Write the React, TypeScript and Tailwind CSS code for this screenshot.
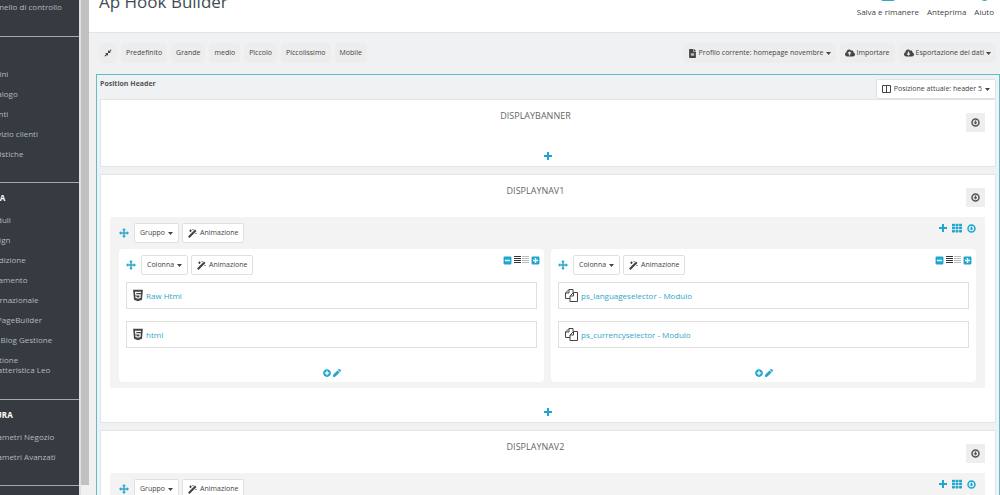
import type { ReactNode } from "react";
import {
  FaCloudDownloadAlt,
  FaCloudUploadAlt,
  FaCompressAlt,
  FaFileAlt,
  FaHtml5,
  FaMinusSquare,
  FaPen,
  FaPlusCircle,
  FaPlusSquare,
  FaTh,
} from "react-icons/fa";

type Widget = { name: string; icon: "html" | "module" };

const shopLinks = ["Ordini", "Catalogo", "Clienti", "Servizio clienti", "Statistiche"];
const improveLinks = [
  "Moduli",
  "Design",
  "Spedizione",
  "Pagamento",
  "Internazionale",
  "Ap PageBuilder",
  "Leo Blog Gestione",
];
const configLinks = ["Parametri Negozio", "Parametri Avanzati"];
const sizes = ["Predefinito", "Grande", "medio", "Piccolo", "Piccolissimo", "Mobile"];

const nav1Columns: Widget[][] = [
  [
    { name: "Raw Html", icon: "html" },
    { name: "html", icon: "html" },
  ],
  [
    { name: "ps_languageselector - Modulo", icon: "module" },
    { name: "ps_currencyselector - Modulo", icon: "module" },
  ],
];

function CircleDown() {
  return (
    <svg width="9" height="9" viewBox="0 0 18 18" fill="none" aria-hidden="true">
      <circle cx="9" cy="9" r="7" stroke="currentColor" strokeWidth="3" />
      <path d="M7.500 5h3v4h2.500L9 13 5 9h2.500z" fill="currentColor" />
    </svg>
  );
}

function PlusIcon() {
  return (
    <svg width="8" height="8" viewBox="0 0 8 8" fill="currentColor" aria-hidden="true">
      <path d="M3 0h2v3h3v2H5v3H3V5H0V3h3z" />
    </svg>
  );
}

function MoveIcon() {
  return (
    <svg width="10" height="10" viewBox="0 0 20 20" fill="currentColor" aria-hidden="true">
      <path d="M10 0l4 4.500h-2.500v4h4V6L20 10l-4.500 4v-2.500h-4v4H14L10 20l-4-4.500h2.500v-4h-4V14L0 10l4.500-4v2.500h4v-4H6z" />
    </svg>
  );
}

function WandIcon() {
  return (
    <svg width="9" height="9" viewBox="0 0 18 18" fill="currentColor" aria-hidden="true">
      <path d="M0 15L14 1l3 3L3 18z" />
      <path d="M4 1h2v5H4zM2.500 2.500h5v2h-5zM9 0h2v2H9zM15 8h2v2h-2z" />
    </svg>
  );
}

function Caret() {
  return (
    <svg width="5" height="3" viewBox="0 0 5 3" fill="currentColor" aria-hidden="true">
      <path d="M0 0h5L2.500 3z" />
    </svg>
  );
}

function CopyIcon() {
  return (
    <svg
      width="13"
      height="13"
      viewBox="0 0 26 26"
      fill="none"
      stroke="currentColor"
      strokeWidth="2"
      strokeLinejoin="round"
      aria-hidden="true"
      className="shrink-0"
    >
      <path d="M10 19H1V8l7-7h8v6" />
      <path d="M8 1v7H1" />
      <path d="M10 14l7-7h8v18H10z" />
      <path d="M17 7v7h-7" />
    </svg>
  );
}

function ColumnsIcon() {
  return (
    <svg width="9" height="8" viewBox="0 0 9 8" fill="none" stroke="currentColor" aria-hidden="true">
      <path d="M.5.5h8v7h-8zM4.500.5v7" />
    </svg>
  );
}

// four dark bars next to four light ones
function WidthBars() {
  return (
    <svg width="15" height="8" viewBox="0 0 15 8" aria-hidden="true">
      {[0, 2, 4, 6].map((y) => (
        <g key={y}>
          <rect x="0" y={y} width="7" height="1" fill="#333" />
          <rect x="8" y={y} width="7" height="1" fill="#bbb" />
        </g>
      ))}
    </svg>
  );
}

function NavLinks({ links }: { links: string[] }) {
  return (
    <ul className="pl-5">
      {links.map((link) => (
        <li key={link} className="h-5">
          <a href="#" className="whitespace-nowrap">
            {link}
          </a>
        </li>
      ))}
    </ul>
  );
}

function Sidebar() {
  return (
    <aside className="w-[79px] shrink-0 overflow-hidden bg-[#363a41] text-[8px] text-[#b4b9be]">
      <nav className="-ml-[35px] leading-[10px]">
        <div className="h-[37px] border-b border-[#a5a9ad] pt-0.5 pl-5">
          <a href="#" className="whitespace-nowrap">
            Pannello di controllo
          </a>
        </div>
        <div className="h-[146px] border-b border-[#a5a9ad] pt-8">
          <NavLinks links={shopLinks} />
        </div>
        <div className="h-[217px] border-b border-[#a5a9ad] pt-2.5">
          <h2 className="mb-3 font-bold text-white">MIGLIORA</h2>
          <NavLinks links={improveLinks} />
          <a href="#" className="block pl-5">
            Gestione
            <br />
            Caratteristica Leo
          </a>
        </div>
        <div className="h-[86px] border-b border-[#a5a9ad] pt-2.5">
          <h2 className="mb-3 font-bold text-white">CONFIGURA</h2>
          <NavLinks links={configLinks} />
        </div>
      </nav>
    </aside>
  );
}

function ToolButton({ children, label }: { children: ReactNode; label?: string }) {
  return (
    <button
      type="button"
      aria-label={label}
      className="flex h-5 items-center gap-0.5 rounded-sm bg-[#ededee] px-[5px] whitespace-nowrap text-[#444]"
    >
      {children}
    </button>
  );
}

function OutlineButton({ children }: { children: ReactNode }) {
  return (
    <button
      type="button"
      className="flex h-5 items-center gap-[3px] rounded-xs border border-[#e0e0e0] bg-white px-[5px] whitespace-nowrap text-[#444]"
    >
      {children}
    </button>
  );
}

function IconButton({ label, children }: { label: string; children: ReactNode }) {
  return (
    <button type="button" aria-label={label} className="text-[#1fa6cf]">
      {children}
    </button>
  );
}

function BlockControls({ label }: { label: string }) {
  return (
    <div className="flex items-center gap-[5px] text-[#2da9cc]">
      <MoveIcon />
      <div className="flex gap-[3px]">
        <OutlineButton>
          {label}
          <Caret />
        </OutlineButton>
        <OutlineButton>
          <WandIcon />
          Animazione
        </OutlineButton>
      </div>
    </div>
  );
}

function Column({ widgets }: { widgets: Widget[] }) {
  return (
    <div className="h-[133px] flex-1 rounded-sm bg-white pt-1.5">
      <div className="mb-[7px] flex justify-between pr-1 pl-[7px]">
        <BlockControls label="Colonna" />
        <div className="flex h-2.5 items-center gap-0.5">
          <IconButton label="Riduci">
            <FaMinusSquare size={9} />
          </IconButton>
          <WidthBars />
          <IconButton label="Allarga">
            <FaPlusSquare size={9} />
          </IconButton>
        </div>
      </div>
      <div className="flex flex-col gap-3 px-[7px]">
        {widgets.map((widget) => (
          <div
            key={widget.name}
            className="flex h-[27px] items-center gap-[3px] border border-[#dfdfdf] px-1.5 text-[#444]"
          >
            {widget.icon === "html" ? <FaHtml5 className="h-[13px] w-2.5" /> : <CopyIcon />}
            <a href="#" className="text-[8px] leading-3 text-[#2fa6cb]">
              {widget.name}
            </a>
          </div>
        ))}
      </div>
      <div className="mt-[21px] flex justify-center gap-0.5">
        <IconButton label="Aggiungi">
          <FaPlusCircle size={8} />
        </IconButton>
        <IconButton label="Modifica">
          <FaPen size={8} />
        </IconButton>
      </div>
    </div>
  );
}

function Group({ columns }: { columns: Widget[][] }) {
  return (
    <div className="mt-2.5 mr-2.5 ml-[9px] h-[171px] bg-[#f3f3f3] px-[9px] pt-1.5">
      <div className="mb-1.5 flex justify-between">
        <BlockControls label="Gruppo" />
        <div className="flex h-2.5 items-center gap-[5px]">
          <IconButton label="Aggiungi colonna">
            <PlusIcon />
          </IconButton>
          <IconButton label="Griglia">
            <FaTh size={10} />
          </IconButton>
          <IconButton label="Espandi">
            <CircleDown />
          </IconButton>
        </div>
      </div>
      <div className="flex gap-[7px]">
        {columns.map((widgets, i) => (
          <Column key={i} widgets={widgets} />
        ))}
      </div>
    </div>
  );
}

function Hook({ name, columns }: { name: string; columns?: Widget[][] }) {
  return (
    <section className="mb-[7px] border border-[#e2e4e6] bg-white">
      <div className="flex gap-1.5 px-2.5">
        <h3 className="flex-1 pt-2.5 text-center text-[9px] leading-3 text-[#666]">{name}</h3>
        <button
          type="button"
          aria-label={"Comprimi " + name}
          className="mt-[13px] flex h-[19px] w-[19px] items-center justify-center bg-[#eee] text-[#555]"
        >
          <CircleDown />
        </button>
      </div>
      {columns && <Group columns={columns} />}
      <div className="flex h-[34px] items-center justify-center pt-3.5">
        <IconButton label={"Aggiungi a " + name}>
          <PlusIcon />
        </IconButton>
      </div>
    </section>
  );
}

export default function App() {
  return (
    <div className="flex h-screen overflow-hidden bg-[#eff1f2] font-['Open_Sans','Noto_Sans',sans-serif] text-[7px] text-[#555]">
      <Sidebar />
      <div className="w-2.5 shrink-0 border-l-2 border-[#dfdfdf] bg-[#f1f1f1]">
        <div className="h-[485px] bg-[#c1c1c1]" />
      </div>

      <div className="min-w-0 flex-1">
        <header className="flex h-[33px] justify-between overflow-hidden border-b border-[#e1e4e6] bg-white pr-1.5 pl-2.5">
          <h1 className="-mt-2 text-[17px] leading-5 text-[#414c52]">Ap Hook Builder</h1>
          <div className="-mt-2 flex gap-2 text-[8px] text-[#444]">
            <a href="#" className="flex flex-col items-center">
              <span className="mb-[5px] h-[9px] w-3.5 rounded-xs bg-[#2fabbd]" />
              Salva e rimanere
            </a>
            <a href="#" className="flex flex-col items-center pt-3.5">
              Anteprima
            </a>
            <a href="#" className="flex flex-col items-center">
              <span className="mb-[5px] h-[9px] w-[9px] rounded-full bg-[#2fabbd]" />
              Aiuto
            </a>
          </div>
        </header>

        <div className="flex justify-between pt-2.5 pr-1 pb-[11px] pl-2.5">
          <div className="flex gap-1">
            <ToolButton label="Comprimi">
              <FaCompressAlt size={8} />
            </ToolButton>
            {sizes.map((size) => (
              <ToolButton key={size}>{size}</ToolButton>
            ))}
          </div>
          <div className="flex gap-1">
            <ToolButton>
              <FaFileAlt size={9} />
              Profilo corrente: homepage novembre
              <Caret />
            </ToolButton>
            <ToolButton>
              <FaCloudUploadAlt size={10} />
              Importare
            </ToolButton>
            <ToolButton>
              <FaCloudDownloadAlt size={10} />
              Esportazione dei dati
              <Caret />
            </ToolButton>
          </div>
        </div>

        <main className="ml-[7px] border border-[#62bdc8] px-[3px]">
          <div className="flex h-6 justify-between pt-1">
            <h2 className="leading-2.5 font-bold">Position Header</h2>
            <OutlineButton>
              <ColumnsIcon />
              Posizione attuale: header 5
              <Caret />
            </OutlineButton>
          </div>
          <Hook name="DISPLAYBANNER" />
          <Hook name="DISPLAYNAV1" columns={nav1Columns} />
          <Hook name="DISPLAYNAV2" columns={nav1Columns} />
        </main>
      </div>
    </div>
  );
}
